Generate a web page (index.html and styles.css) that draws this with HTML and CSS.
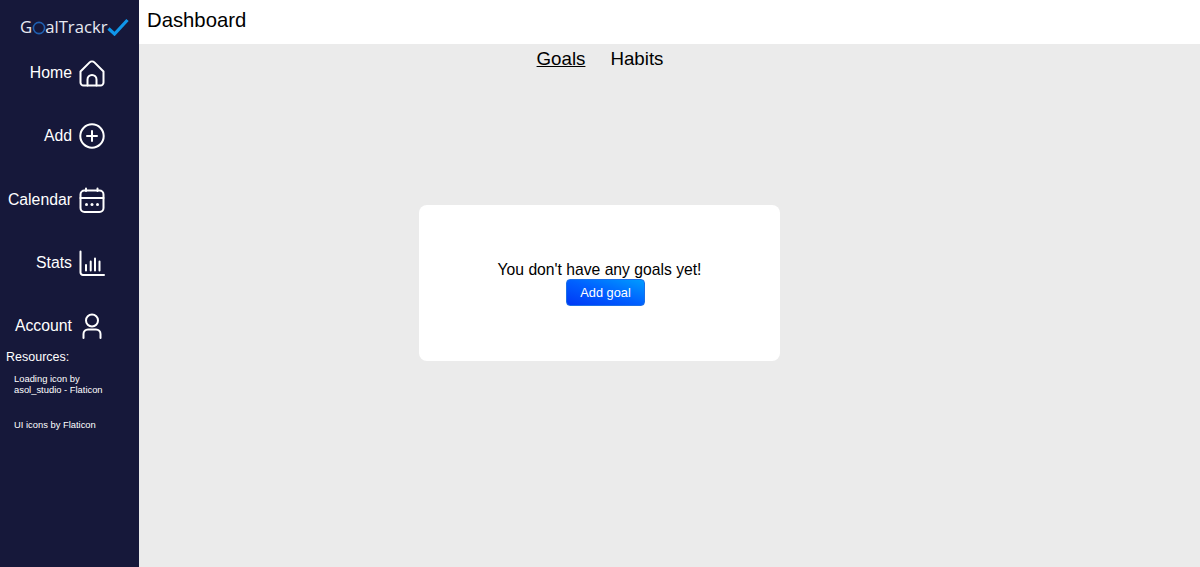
FILE: index.html
```html
<!DOCTYPE html>
<html lang="en">
<head>
<meta charset="utf-8">
<title>GoalTrackr Dashboard</title>
<link rel="stylesheet" href="styles.css">
</head>
<body>
<div class="app">
  <aside class="sidebar">
    <div class="logo">
      <span class="logo-text">G</span>
      <svg class="logo-ring" viewBox="0 0 14 14" aria-hidden="true"><circle cx="7" cy="7" r="5.6" fill="none" stroke="#1f5fb0" stroke-width="1.600"/></svg>
      <span class="logo-text">alTrackr</span>
      <svg class="logo-check" viewBox="0 0 22 18" aria-hidden="true"><path d="M1.500 10.500 L7.500 16 L20.500 2" fill="none" stroke="#0f96ea" stroke-width="3.200"/></svg>
    </div>
    <nav class="nav">
      <a class="nav-item"><span>Home</span>
        <svg class="nav-icon" viewBox="0 0 28 28" aria-hidden="true"><path d="M2.500 12.500 L11.600 3.400 a3.400 3.400 0 0 1 4.800 0 L25.500 12.500 V23.500 a3 3 0 0 1 -3 3 H5.500 a3 3 0 0 1 -3 -3 Z"/><path d="M9.500 26.500 V20.500 a4.500 4.500 0 0 1 9 0 V26.500"/></svg>
      </a>
      <a class="nav-item"><span>Add</span>
        <svg class="nav-icon" viewBox="0 0 28 28" aria-hidden="true"><circle cx="14" cy="14" r="11.700"/><path d="M14 9 V19 M9 14 H19"/></svg>
      </a>
      <a class="nav-item"><span>Calendar</span>
        <svg class="nav-icon" viewBox="0 0 28 28" aria-hidden="true"><rect x="2.500" y="4.500" width="23" height="21.500" rx="4"/><path d="M2.500 12 H25.500 M8 2.500 V5 M19.500 2.500 V5"/><circle class="dot" cx="8.500" cy="18.500" r="1.500"/><circle class="dot" cx="14" cy="18.500" r="1.500"/><circle class="dot" cx="19.500" cy="18.500" r="1.500"/></svg>
      </a>
      <a class="nav-item"><span>Stats</span>
        <svg class="nav-icon" viewBox="0 0 28 28" aria-hidden="true"><path d="M2.500 2.500 V23.500 a2.500 2.500 0 0 0 2.500 2.500 H26"/><path d="M8 16 V21.500 M12.700 12.500 V21.500 M17 9.500 V21.500 M21.500 12.500 V21.500"/></svg>
      </a>
      <a class="nav-item"><span>Account</span>
        <svg class="nav-icon" viewBox="0 0 28 28" aria-hidden="true"><circle cx="14" cy="8.500" r="6"/><path d="M5.500 26 V22 a4.500 4.500 0 0 1 4.500 -4.500 H18 a4.500 4.500 0 0 1 4.500 4.500 V26"/></svg>
      </a>
    </nav>
    <div class="resources">
      <h3 class="resources-title">Resources:</h3>
      <p class="credit credit-first">Loading icon by<br>asol_studio - Flaticon</p>
      <p class="credit credit-second">UI icons by Flaticon</p>
    </div>
  </aside>
  <main class="main">
    <header class="topbar"><h1 class="page-title">Dashboard</h1></header>
    <div class="content">
      <div class="tabs">
        <a class="tab tab-active">Goals</a>
        <a class="tab">Habits</a>
      </div>
      <section class="card">
        <p class="empty-text">You don't have any goals yet!</p>
        <button class="add-button" type="button">Add goal</button>
      </section>
    </div>
  </main>
</div>
</body>
</html>
```

FILE: styles.css
```css
* { box-sizing: border-box; }
html, body { margin: 0; height: 100%; }
body { font-family: "Liberation Sans", Arial, sans-serif; color: #000; background: #ebebeb; }
.app { display: flex; height: 567px; overflow: hidden; }

.sidebar { flex: 0 0 139px; width: 139px; background: #16183a; color: #fff; display: flex; flex-direction: column; }
.logo { display: flex; align-items: center; height: 44px; padding: 10px 0 0 20px; }
.logo-text { font-family: "Open Sans", sans-serif; font-size: 16.7px; line-height: 22px; color: #e8eaf2; }
.logo-ring { width: 14px; height: 14px; margin: 1px -1px 0 0; }
.logo-check { width: 22px; height: 18px; margin-left: -1px; margin-top: -1px; }

.nav { display: flex; flex-direction: column; gap: 35.3px; padding-top: 15px; }
.nav-item { display: flex; align-items: center; justify-content: flex-end; gap: 6px; height: 28px; padding-right: 33px; font-size: 15.8px; color: #fff; }
.nav-icon { width: 28px; height: 28px; flex: none; fill: none; stroke: #fff; stroke-width: 2; stroke-linecap: round; stroke-linejoin: round; }
.nav-icon .dot { fill: #fff; stroke: none; }

.resources { padding: 10px 0 0 6px; }
.resources-title { margin: 0; font-size: 12.5px; line-height: 15px; font-weight: 400; }
.credit { margin: 0; padding-left: 8px; font-size: 9.4px; line-height: 10.500px; color: #fff; }
.credit-first { margin-top: 9px; }
.credit-second { margin-top: 25px; }

.main { flex: 1; min-width: 0; display: flex; flex-direction: column; }
.topbar { height: 44px; background: #fff; padding-left: 8px; display: flex; align-items: center; }
.page-title { margin: 0; font-size: 20.3px; font-weight: 400; line-height: 24px; position: relative; top: -2px; }
.content { padding-right: 141px; display: flex; flex-direction: column; align-items: center; }
.tabs { display: flex; gap: 25px; margin-left: 2px; padding-top: 4px; height: 161px; font-size: 18.72px; line-height: 22px; }
.tab-active { text-decoration: underline; }
.card { width: 361px; height: 156px; background: #fff; border-radius: 8px; display: flex; flex-direction: column; align-items: center; padding-top: 56px; }
.empty-text { margin: 0 0 0 1px; font-size: 15.7px; line-height: 18px; }
.add-button { margin: 0 0 0 13px; width: 79px; height: 27px; padding: 0; border: 1px solid #1a6fe8; border-radius: 4px; color: #fff; font: 400 12.8px "Liberation Sans", Arial, sans-serif; background: linear-gradient(to top right, #0038f5 0%, #0060ff 50%, #009cff 100%); }
```
